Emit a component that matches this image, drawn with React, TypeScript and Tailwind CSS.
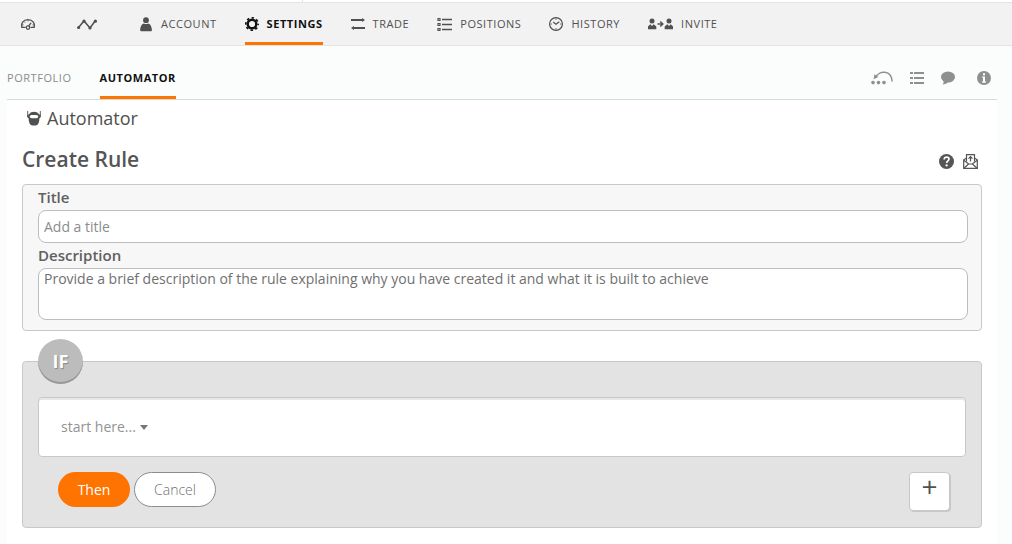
import type { ReactNode } from 'react'
import clsx from 'clsx'

const GaugeIcon = () => (
    <svg width="14" height="15" viewBox="0 0 14 15" fill="none" stroke="currentColor">
        <path d="M4.600 10.400H0.900C-0.200 6 2.600 2.600 7 2.600s7.200 3.400 6.100 7.800H9.400" strokeWidth="1.400" />
        <circle cx="7" cy="10.600" r="1.700" strokeWidth="1.200" />
        <path d="M7.700 9.200L10 5.800" strokeWidth="1.400" />
        <path d="M7 3v1.500M3.500 5l.8.8M1.300 7.900h1.300M11.400 7.900h1.300" strokeWidth="0.800" />
    </svg>
)

const ChartIcon = () => (
    <svg width="20" height="15" viewBox="0 0 20 15" fill="currentColor">
        <path d="M1.500 10.500L7 4l6 7 5.500-7.500" fill="none" stroke="currentColor" strokeWidth="1.500" />
        <circle cx="1.600" cy="10.500" r="1.600" />
        <circle cx="7" cy="4.200" r="1.600" />
        <circle cx="13" cy="11" r="1.600" />
        <circle cx="18.400" cy="4.200" r="1.600" />
    </svg>
)

const UserIcon = () => (
    <svg width="13" height="15" viewBox="0 0 13 15" fill="currentColor">
        <circle cx="6" cy="3.200" r="2.900" />
        <path d="M0.200 13.200C0.200 9.500 2 6.500 4 6.400c1 .7 3 .7 4 0 2 .1 3.900 3.100 3.900 6.800 0 .7-.5 1.100-1.200 1.100H1.400c-.7 0-1.200-.4-1.200-1.100z" />
    </svg>
)

const GearIcon = () => (
    <svg width="14" height="14" viewBox="0 0 14 14" fill="none" stroke="currentColor">
        <circle cx="7" cy="7" r="4.300" strokeWidth="2.400" />
        <circle cx="7" cy="7" r="6.200" strokeWidth="1.600" strokeDasharray="2.450 2.420" strokeDashoffset="1.200" />
    </svg>
)

const TradeIcon = () => (
    <svg width="14" height="14" viewBox="0 0 14 14" fill="currentColor">
        <path d="M0 2h11V1L14 3l-3 2V4H0zM14 10H3V9L0 11l3 2v-1h11z" />
    </svg>
)

const PositionsIcon = () => (
    <svg width="15" height="15" viewBox="0 0 15 15" fill="none" stroke="currentColor">
        <path d="M5 2.500H15M5 7.500H15M5 12.500H15" strokeWidth="1.600" />
        <path d="M1 1.500h2v2H1zM1 6.500h2v2H1zM1 11.500h2v2H1z" strokeWidth="1.200" />
    </svg>
)

const ClockIcon = () => (
    <svg width="14" height="14" viewBox="0 0 14 14" fill="none" stroke="currentColor">
        <circle cx="7" cy="7" r="6.400" strokeWidth="1.200" />
        <path d="M4.200 5L7 7.300l3.300-2.600" strokeWidth="1.200" />
        <path d="M7 1.600v1.200M7 11.200v1.200M1.600 7h1.200M11.200 7h1.200" />
    </svg>
)

const InviteIcon = () => (
    <svg width="25" height="12" viewBox="0 0 25 12" fill="currentColor">
        <circle cx="4" cy="3" r="2.500" />
        <path d="M0 11.300V8.500l2.300-2.200L4 8l1.700-1.700L8.300 8.500v2.800z" />
        <circle cx="21" cy="3" r="2.500" />
        <path d="M16.700 11.300V8.500l2.600-2.200L21 8l1.700-1.700L25 8.500v2.800z" />
        <path d="M9.500 6h5M12.300 3.500L14.800 6l-2.500 2.500" fill="none" stroke="currentColor" strokeWidth="1.500" />
    </svg>
)

const BackArcIcon = () => (
    <svg width="22" height="14" viewBox="0 0 22 14" fill="currentColor">
        <path d="M4.500 6.500C8 -0.800 20.500-1.500 21.200 10.500" fill="none" stroke="currentColor" strokeWidth="1.500" />
        <path d="M2.600 8.200L3.400 3.200l4 2.800z" />
        <circle cx="2" cy="11.600" r="1.800" />
        <circle cx="7.500" cy="11.600" r="1.800" />
        <circle cx="13" cy="11.600" r="1.800" />
    </svg>
)

const ListIcon = () => (
    <svg width="14" height="12" viewBox="0 0 14 12" fill="currentColor">
        <path d="M0 0h3v2H0zM4 0h10v2H4zM0 5h3v2H0zM4 5h10v2H4zM0 10h3v2H0zM4 10h10v2H4z" />
    </svg>
)

const ChatIcon = () => (
    <svg width="14" height="14" viewBox="0 0 14 14" fill="currentColor">
        <ellipse cx="7" cy="6" rx="7" ry="5.500" />
        <path d="M2.500 9.500c.4 1.700 0 2.800-.8 3.900 2 0 4-.9 5.300-2.200z" />
    </svg>
)

const InfoIcon = () => (
    <svg width="14" height="14" viewBox="0 0 14 14">
        <circle cx="7" cy="7" r="7" fill="currentColor" />
        <path d="M6 2.300h2v1.900H6zM5 5.500h3v5h1v1.200H5v-1.200h1V6.600H5z" fill="#fff" />
    </svg>
)

const HelpIcon = () => (
    <svg width="15" height="15" viewBox="0 0 15 15" fill="none">
        <circle cx="7.500" cy="7.500" r="7.500" fill="currentColor" />
        <path d="M5.200 5.400c0-1.500 1-2.300 2.400-2.300s2.400.8 2.400 2c0 1.900-2.300 1.800-2.300 4" stroke="#fff" strokeWidth="1.700" />
        <circle cx="7.600" cy="11.400" r="1.150" fill="#fff" />
    </svg>
)

const MailIcon = () => (
    <svg width="15" height="15" viewBox="0 0 15 15" fill="none" stroke="currentColor" strokeWidth="1.200">
        <path d="M3.500 7.500V0.600h8v6.900" />
        <path d="M3.300 4.300L0.700 5.800v8.600h13.600V5.800l-2.600-1.500" />
        <path d="M0.700 6.300l5 3.700h3.600l5-3.700M0.900 14.200l4.600-4.200M14.100 14.200L9.500 10" />
        <path d="M7.500 7.500V3M5.500 4.700l2-2 2 2" />
    </svg>
)

const RobotIcon = () => (
    <svg width="14" height="15" viewBox="0 0 14 15" fill="currentColor">
        <path d="M0.700 0v6M13.300 0v6" stroke="currentColor" strokeWidth="0.900" />
        <path d="M0.500 3.800l1.400-.4C3 1.400 5 0.700 7 0.700s4 .7 5.100 2.700l1.400.4v2.600l-1.200 1.200v1.600l-.8 3c-.5 1.600-1.900 2.300-4.500 2.300s-4-.7-4.500-2.300l-.8-3V7.600L0.500 6.400z" />
        <rect x="2.800" y="3.900" width="8.400" height="3.400" rx="1.700" fill="#fff" />
    </svg>
)

const navItems: { label: string; icon: ReactNode; active?: boolean }[] = [
    { label: 'ACCOUNT', icon: <UserIcon /> },
    { label: 'SETTINGS', icon: <GearIcon />, active: true },
    { label: 'TRADE', icon: <TradeIcon /> },
    { label: 'POSITIONS', icon: <PositionsIcon /> },
    { label: 'HISTORY', icon: <ClockIcon /> },
    { label: 'INVITE', icon: <InviteIcon /> },
]

const tools = [
    { label: 'Back', icon: <BackArcIcon /> },
    { label: 'List', icon: <ListIcon /> },
    { label: 'Chat', icon: <ChatIcon /> },
    { label: 'Information', icon: <InfoIcon /> },
]

function TopNav() {
    return (
        <nav className="flex h-11 items-stretch border-y border-[#e3e3e3] bg-[#f2f2f2] pl-[21px] text-[#505050]">
            <div className="mr-[43px] flex items-center gap-[42px]">
                <a href="#dashboard" aria-label="Dashboard"><GaugeIcon /></a>
                <a href="#charts" aria-label="Charts"><ChartIcon /></a>
            </div>
            <div className="flex gap-7">
                {navItems.map((item) => (
                    <a
                        key={item.label}
                        href={`#${item.label.toLowerCase()}`}
                        className={clsx(
                            'flex items-center gap-2 border-b-[3px] pt-[3px] text-[11px] tracking-wider',
                            item.active ? 'border-[#ff7300] font-bold text-[#111]' : 'border-transparent',
                        )}
                    >
                        {item.icon}
                        <span>{item.label}</span>
                    </a>
                ))}
            </div>
        </nav>
    )
}

function SubNav() {
    return (
        <div className="mr-[15px] ml-[7px] flex h-[54px] justify-between border-b border-[#d5dadf]">
            <nav className="flex gap-7 text-[11px] tracking-wider">
                <a href="#portfolio" className="flex items-center border-b-[3px] border-transparent pt-3.5 text-[#8c8c8c]">PORTFOLIO</a>
                <a href="#automator" className="flex items-center border-b-[3px] border-[#ff7300] pt-3.5 font-bold text-[#111]">AUTOMATOR</a>
            </nav>
            <div className="flex items-center gap-[17px] pt-2.5 pr-[6px] text-[#8f8f8f]">
                {tools.map((tool) => (
                    <button key={tool.label} type="button" aria-label={tool.label} className="last:ml-[5px]">
                        {tool.icon}
                    </button>
                ))}
            </div>
        </div>
    )
}

export default function App() {
    return (
        <div className="min-h-screen bg-[#fafdfc] font-['Open_Sans',sans-serif] text-[#505050]">
            <div className="flex h-0.5 bg-white">
                <div className="w-[303px] border-r border-[#e3e3e3]" />
            </div>
            <TopNav />
            <SubNav />
            <main className="mr-[15px] ml-[7px] min-h-[calc(100vh-100px)] rounded-t bg-white px-[15px] pt-1.5 pb-4">
                <h1 className="flex h-6 items-center gap-1.5 pl-[5px] text-lg font-medium">
                    <RobotIcon />
                    <span>Automator</span>
                </h1>
                <div className="mt-3.5 flex h-8 items-center justify-between">
                    <h2 className="text-[21px] font-semibold text-[#555]">Create Rule</h2>
                    <div className="flex gap-[9px] pt-0.5 pr-1 text-[#555]">
                        <button type="button" aria-label="Help"><HelpIcon /></button>
                        <button type="button" aria-label="Send"><MailIcon /></button>
                    </div>
                </div>

                <section className="mt-2 rounded border border-[#c8c8c8] bg-[#f7f7f7] pt-0.5 pr-[13px] pb-2.5 pl-[15px]">
                    <label htmlFor="title" className="block h-[23px] text-[15px] leading-5 font-semibold text-[#606060]">Title</label>
                    <input
                        id="title"
                        type="text"
                        placeholder="Add a title"
                        className="block h-[33px] w-full rounded-lg border border-[#bdbdbd] bg-white px-[5px] text-sm placeholder:text-[#8c8c8c]"
                    />
                    <label htmlFor="description" className="mt-0.5 block h-[23px] text-[15px] leading-5 font-semibold text-[#606060]">Description</label>
                    <textarea
                        id="description"
                        placeholder="Provide a brief description of the rule explaining why you have created it and what it is built to achieve"
                        className="block h-[52px] w-full resize-none rounded-lg border border-[#bdbdbd] bg-white px-[5px] text-sm placeholder:text-[#707070]"
                    />
                </section>

                <section className="mt-[30px] rounded border border-[#c8c8c8] bg-[#e3e3e3] px-[15px] pb-4">
                    <div className="-mt-[23px] flex size-[45px] items-center justify-center rounded-full bg-[#bcbcbc] pb-0.5 text-lg font-bold text-white shadow-[inset_0_-2px_0_#999] text-shadow-[1px_1px_1px_#888]">
                        IF
                    </div>
                    <div className="mt-[13px] flex h-[60px] items-center rounded border border-[#c8c8c8] bg-white pl-[22px] shadow-[inset_0_2px_0_#e8e8e8]">
                        <button type="button" className="flex items-center gap-1 text-sm text-[#939393]">
                            start here...
                            <svg width="8" height="5" viewBox="0 0 8 5" fill="#777"><path d="M0 0h8L4 5z" /></svg>
                        </button>
                    </div>
                    <div className="mt-[15px] flex items-start justify-between pr-4 pl-5">
                        <div className="flex gap-1">
                            <button type="button" className="h-[35px] w-[72px] rounded-full bg-[#ff7300] text-sm text-white">Then</button>
                            <button type="button" className="h-[35px] w-[82px] rounded-full border border-[#8c8c8c] bg-white text-sm font-light text-[#707070]">Cancel</button>
                        </div>
                        <button type="button" aria-label="Add condition" className="flex h-[39px] w-[41px] justify-center rounded border border-[#c8c8c8] bg-white text-[28px] leading-[27px] shadow-[1px_1px_0_#c8c8c8]">
                            +
                        </button>
                    </div>
                </section>
            </main>
        </div>
    )
}
